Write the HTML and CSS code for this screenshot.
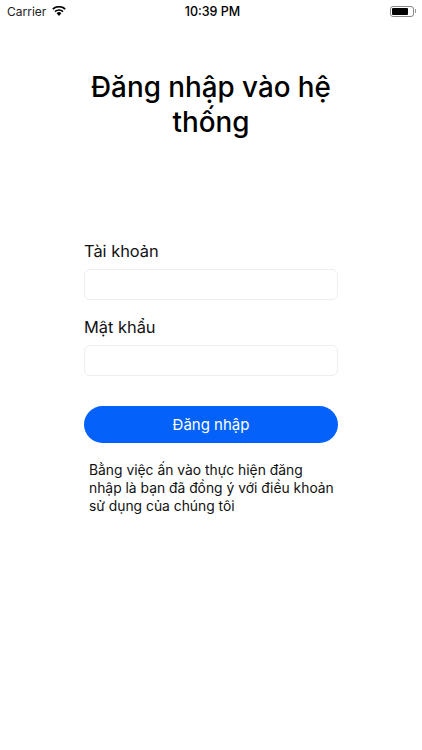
FILE: index.html
```html
<!DOCTYPE html>
<html lang="vi">
<head>
<meta charset="utf-8">
<title>Đăng nhập</title>
<link rel="stylesheet" href="styles.css">
</head>
<body>
<div class="status">
  <div class="status-left">
    <span>Carrier</span>
    <svg class="wifi" viewBox="0 0 14 10" width="14" height="10"><path d="M7 10 4.6 7.3a3.4 3.4 0 0 1 4.8 0Z" fill="#000"/><path d="M3 5.6A5.8 5.8 0 0 1 11 5.6" fill="none" stroke="#000" stroke-width="1.7"/><path d="M.8 3.2A9 9 0 0 1 13.2 3.2" fill="none" stroke="#000" stroke-width="1.7"/></svg>
  </div>
  <div class="status-time">10:39 PM</div>
  <div class="status-right">
    <div class="battery"><div class="battery-fill"></div></div>
    <div class="battery-cap"></div>
  </div>
</div>
<main class="page">
  <h1 class="title">Đăng nhập vào hệ thống</h1>
  <form class="form">
    <label class="label">Tài khoản</label>
    <div class="field"></div>
    <label class="label second">Mật khẩu</label>
    <div class="field"></div>
    <div class="button">Đăng nhập</div>
    <p class="note">Bằng việc ấn vào thực hiện đăng nhập là bạn đã đồng ý với điều khoản sử dụng của chúng tôi</p>
  </form>
</main>
</body>
</html>
```
FILE: styles.css
```css
* { box-sizing: border-box; }
html, body { margin: 0; padding: 0; background: #fff; }
body { width: 422px; height: 750px; overflow: hidden; font-family: "Inter", "Liberation Sans", sans-serif; color: #000; }
.status { height: 22px; display: flex; align-items: center; justify-content: space-between; position: relative; padding: 0 7px; font-size: 12px; }
.status-left { display: flex; align-items: center; gap: 6px; color: #222; }
.wifi { margin-top: 0; }
.status-time { position: absolute; left: 3px; right: 0; text-align: center; font-size: 12.5px; font-weight: 500; }
.status-right { display: flex; align-items: center; gap: 1px; margin-right: -1px; }
.battery { width: 24px; height: 11px; border: 1px solid #888; border-radius: 3px; padding: 1px; }
.battery-fill { width: 16px; height: 100%; background: #000; border-radius: 1px; }
.battery-cap { width: 1.5px; height: 4px; background: #999; }
.page { padding: 0 84px; }
.title { margin: 48px -10px 0; font-size: 27.8px; line-height: 35px; font-weight: 500; text-align: center; }
.form { margin-top: 99px; }
.label { display: block; font-size: 16.4px; line-height: 24px; color: #111; }
.label.second { margin-top: 15px; }
.field { height: 31px; margin-top: 6px; border: 1px solid #eee; border-radius: 6px; }
.button { height: 37px; margin-top: 30px; border-radius: 19px; background: #0462fb; color: #fff; font-size: 15px; line-height: 37px; text-align: center; }
.note { margin: 18px 0 0; padding-left: 5px; font-size: 13.85px; line-height: 18px; color: #111; }
```
